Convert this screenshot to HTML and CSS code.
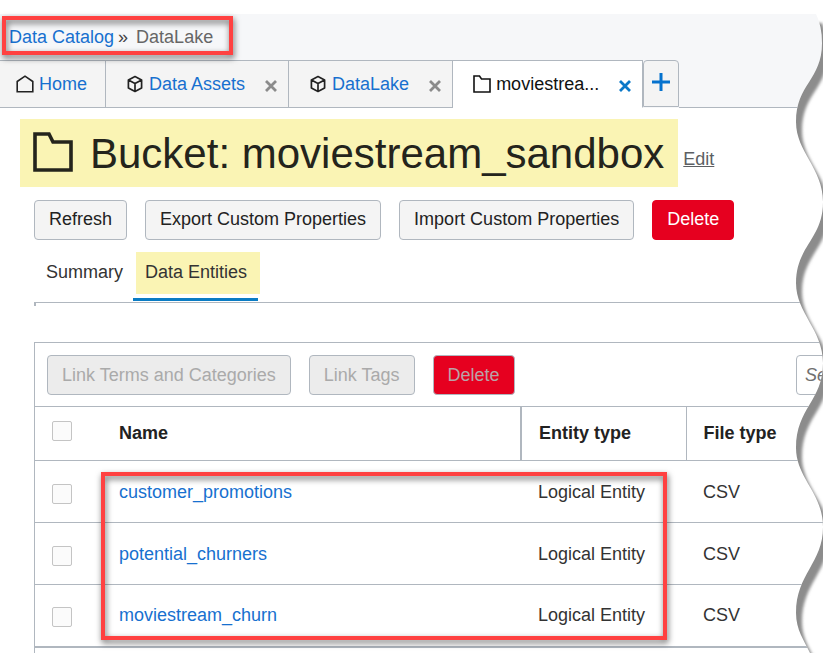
FILE: index.html
```html
<!DOCTYPE html>
<html lang="en">
<head>
<meta charset="utf-8">
<title>Bucket: moviestream_sandbox</title>
<link rel="stylesheet" href="styles.css">
</head>
<body>
<svg class="defs" width="0" height="0" aria-hidden="true">
  <symbol id="cube" viewBox="0 0 18 18"><path d="M9 1.6 15.6 5v8L9 16.4 2.4 13V5zM2.4 5 9 8.6 15.6 5M9 8.6v7.8" fill="none" stroke="currentColor" stroke-width="1.7" stroke-linejoin="round"/></symbol>
  <symbol id="folder" viewBox="0 0 40 40"><path d="M2 2h14l4 8h18v28H2z" fill="none" stroke="currentColor" stroke-width="3.6"/></symbol>
  <symbol id="cross" viewBox="0 0 12 12"><path d="m1 1 10 10M11 1 1 11" fill="none" stroke="currentColor" stroke-width="2.8"/></symbol>
</svg>
<div class="page">
  <header class="top">
    <nav class="breadcrumb" aria-label="Breadcrumb">
      <a href="#">Data Catalog</a><span class="sep">»</span><span class="current">DataLake</span>
      <div class="callout callout-crumb"></div>
    </nav>
    <nav class="tabs" aria-label="Open tabs">
      <div class="tab tab-home">
        <svg class="icon" viewBox="0 0 18 18"><path d="M1.2 16.8V6.5L9 1.2l7.8 5.3v10.3z" fill="none" stroke="currentColor" stroke-width="1.6"/></svg>
        <a href="#">Home</a>
      </div>
      <div class="tab">
        <svg class="icon"><use href="#cube"/></svg><a href="#">Data Assets</a>
        <button class="close" aria-label="Close Data Assets"><svg><use href="#cross"/></svg></button>
      </div>
      <div class="tab">
        <svg class="icon"><use href="#cube"/></svg><a href="#">DataLake</a>
        <button class="close" aria-label="Close DataLake"><svg><use href="#cross"/></svg></button>
      </div>
      <div class="tab active">
        <svg class="icon" viewBox="0 0 18 18"><path d="M1 1h5.5l2 3H17v13H1z" fill="none" stroke="currentColor" stroke-width="1.6"/></svg><span>moviestrea...</span>
        <button class="close" aria-label="Close moviestream_sandbox"><svg><use href="#cross"/></svg></button>
      </div>
      <button class="add" aria-label="New tab"><svg viewBox="0 0 18 18"><path d="M9 0v18M0 9h18" stroke="currentColor" stroke-width="3"/></svg></button>
      <div class="rest"></div>
    </nav>
  </header>
  <main>
    <div class="title-row">
      <h1><svg class="title-icon"><use href="#folder"/></svg>Bucket: moviestream_sandbox</h1>
      <a class="edit" href="#">Edit</a>
    </div>
    <div class="actions">
      <button class="btn">Refresh</button>
      <button class="btn">Export Custom Properties</button>
      <button class="btn">Import Custom Properties</button>
      <button class="btn danger">Delete</button>
    </div>
    <nav class="subtabs" aria-label="Bucket sections">
      <a href="#">Summary</a>
      <a href="#" class="selected"><span>Data Entities</span></a>
    </nav>
    <div class="rule"></div>
    <section class="panel">
      <div class="toolbar">
        <button class="btn" disabled>Link Terms and Categories</button>
        <button class="btn" disabled>Link Tags</button>
        <button class="btn danger" disabled>Delete</button>
        <input class="search" type="text" placeholder="Search" aria-label="Search">
      </div>
      <div class="table-wrap">
        <table>
          <colgroup><col class="c-check"><col><col class="c-entity"><col class="c-file"></colgroup>
          <thead>
            <tr><th><input type="checkbox" aria-label="Select all"></th><th class="name">Name</th><th class="entity">Entity type</th><th>File type</th></tr>
          </thead>
          <tbody>
            <tr><td><input type="checkbox" aria-label="Select customer_promotions"></td><td><a href="#">customer_promotions</a></td><td>Logical Entity</td><td>CSV</td></tr>
            <tr><td><input type="checkbox" aria-label="Select potential_churners"></td><td><a href="#">potential_churners</a></td><td>Logical Entity</td><td>CSV</td></tr>
            <tr><td><input type="checkbox" aria-label="Select moviestream_churn"></td><td><a href="#">moviestream_churn</a></td><td>Logical Entity</td><td>CSV</td></tr>
          </tbody>
        </table>
        <div class="callout callout-rows"></div>
      </div>
    </section>
  </main>
  <svg class="torn" viewBox="0 0 33 653" aria-hidden="true">
    <defs>
      <path id="sheet" d="M-60 14H26Q32 26 32 43C32 80 6 84 6 122C6 152 33 168 33 202C33 239 6 246 6 283C6 313 33 330 33 363C33 401 6 408 6 448C6 478 33 493 33 527C33 563 6 574 6 613C6 630 14 640 20 653V700H-60z"/>
      <clipPath id="outside"><path d="M33 0H24V14H26Q32 26 32 43C32 80 6 84 6 122C6 152 33 168 33 202C33 239 6 246 6 283C6 313 33 330 33 363C33 401 6 408 6 448C6 478 33 493 33 527C33 563 6 574 6 613C6 630 14 640 20 653H33z"/></clipPath>
      <filter id="soft" x="-20%" y="-5%" width="150%" height="110%"><feGaussianBlur stdDeviation="1.8"/></filter>
    </defs>
    <g clip-path="url(#outside)">
      <rect width="33" height="653" fill="#fff"/>
      <use href="#sheet" x="6" y="9" fill="#8c8c8c" filter="url(#soft)"/>
    </g>
  </svg>
</div>
</body>
</html>
```
FILE: styles.css
```css
:root {
  --line: #b0b7bf;
  --link: #1770cf;
  --mark: #faf4b4;
  --red: #e6001f;
}
* { box-sizing: border-box; }
body {
  margin: 0;
  background: #fff;
  color: #333;
  font: 18px/20px "Liberation Sans", Arial, sans-serif;
}
button, input { font: inherit; }
a { color: var(--link); text-decoration: none; }
.defs { position: absolute; }
.page {
  position: relative;
  display: flex;
  flex-direction: column;
  height: 100vh;
  padding-top: 14px;
  overflow: hidden;
}

/* Header */
.top { background: #f6f7f9; }
.breadcrumb {
  position: relative;
  display: flex;
  height: 46px;
  padding: 13px 9px;
  color: #666;
}
.sep { margin: 0 8px 0 4px; color: #444; }
.tabs { display: flex; height: 48px; }
.tab {
  display: flex;
  align-items: center;
  padding: 0 11px 0 20px;
  border: solid var(--line);
  border-width: 1px 1px 1px 0;
  background: #f4f4f4;
  color: #222;
}
.tab-home { padding: 0 18px 0 16px; }
.tab.active { background: #fff; border-bottom-color: #fff; color: #111; }
.icon { width: 18px; height: 18px; margin-right: 5px; }
.close {
  display: flex;
  margin: 4px 0 0 20px;
  padding: 0;
  border: 0;
  background: none;
  color: #8b8b8b;
}
.close svg { width: 12px; height: 12px; }
.active .close { color: #0a78c8; }
.add {
  width: 36px;
  margin-bottom: 1px;
  padding: 0 8px 4px;
  border: 1px solid var(--line);
  border-radius: 4px 4px 0 0;
  background: #f4f4f4;
  color: #0572ce;
}
.add svg { display: block; width: 18px; height: 18px; }
.rest { flex: 1; border-bottom: 1px solid var(--line); }

/* Bucket heading */
main { display: flex; flex: 1; flex-direction: column; padding: 11px 0 0 34px; }
.title-row { display: flex; align-items: center; gap: 5px; margin-left: -14px; }
h1 {
  display: flex;
  align-items: center;
  gap: 17px;
  height: 68px;
  margin: 0;
  padding: 2px 14px 0 13px;
  background: var(--mark);
  color: #24241c;
  font-size: 42px;
  font-weight: 400;
}
.title-icon { width: 40px; height: 40px; margin-bottom: 4px; }
.edit { margin-top: 12px; color: #5c5f63; text-decoration: underline; }
.actions { display: flex; gap: 18px; margin-top: 13px; }
.btn {
  flex: none;
  height: 40px;
  padding: 0 14px 2px;
  border: 1px solid var(--line);
  border-radius: 4px;
  background: #f4f4f4;
  color: #222;
}
.btn:disabled { padding-bottom: 0; background: #ececec; color: #aaa; }
.danger { border-color: var(--red); background: var(--red); color: #fff; }
.danger:disabled { border-color: var(--line); background: var(--red); color: #b9a3a8; }

/* Section tabs */
.subtabs {
  display: flex;
  align-items: flex-start;
  height: 62px;
  padding-top: 12px;
}
.subtabs a { padding: 10px 10px 10px 12px; color: #333; }
.subtabs .selected { padding: 0 0 4px 3px; border-bottom: 3px solid #0a7cc4; }
.selected span { display: block; margin-right: -2px; padding: 10px 13px 12px 9px; background: var(--mark); }
.rule { height: 4px; border: solid var(--line); border-width: 1px 0 0 2px; }

/* Entities table */
.panel { flex: 1; margin-top: 36px; border: solid var(--line); border-width: 1px 0 0 1px; }
.toolbar { display: flex; gap: 18px; margin-right: -180px; padding: 12px 12px 11px; }
.search {
  width: 195px;
  height: 40px;
  margin-left: auto;
  padding: 0 8px;
  border: 1px solid var(--line);
  border-radius: 4px;
}
.search::placeholder { color: #707070; font-style: italic; }
.table-wrap { position: relative; }
table { width: 100%; border-collapse: collapse; table-layout: fixed; }
.c-check { width: 67px; }
.c-entity { width: 165px; }
.c-file { width: 137px; }
th, td { padding: 0 17px; border: solid var(--line); border-width: 1px 0; text-align: left; white-space: nowrap; }
th { height: 54px; padding-bottom: 2px; color: #222; }
td { height: 62px; }
th.name { border-right-width: 2px; }
th.entity { border-right-width: 1px; }
tbody tr:last-child td { border-bottom-width: 2px; }
input[type="checkbox"] {
  display: block;
  width: 20px;
  height: 20px;
  margin: 4px 0 0;
  border: 1px solid #c4c4c4;
  border-radius: 2px;
  background: #fbfbfb;
  appearance: none;
}
th input[type="checkbox"] { margin: 0 0 4px; }

/* Callout frames and torn edge */
.callout {
  position: absolute;
  border: 4px solid #ff4141;
  filter: drop-shadow(1px 3px 3px rgb(0 0 0 / 60%));
}
.callout-crumb { top: 2px; left: 2px; width: 231px; height: 39px; }
.callout-rows { top: 66px; right: 156px; bottom: 8px; left: 66px; }
.torn { position: absolute; top: 0; right: 0; width: 33px; height: 653px; }
```
